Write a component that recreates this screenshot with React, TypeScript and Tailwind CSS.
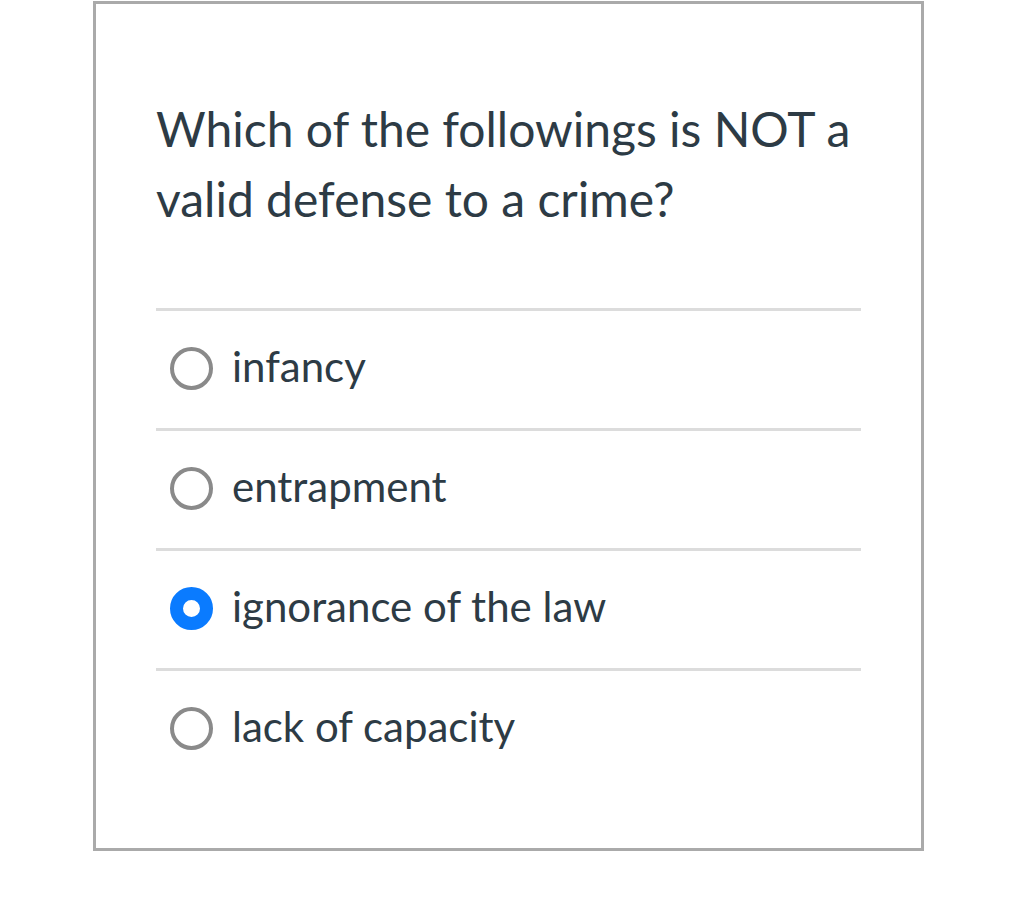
import React from "react";

const options = ["infancy", "entrapment", "ignorance of the law", "lack of capacity"];

export default function App() {
  return (
    <div className="w-[1010px] h-[918px] bg-white" style={{ fontFamily: "Lato, sans-serif" }}>
      <div className="ml-[93px] mt-[1px] w-[831px] h-[850px] border-[3px] border-[#aaaaaa] px-[60px] pt-[90px]">
        <p className="text-[48px] leading-[70px] text-[#2d3b45]">
          Which of the followings is NOT a valid defense to a crime?
        </p>
        <div className="mt-[74px]">
          {options.map((o, i) => (
            <div key={o} className="flex items-center h-[120px] border-t-[3px] border-[#dcdcdc]">
              {i === 2 ? (
                <span className="ml-[14px] mb-[2px] w-[43px] h-[43px] rounded-full border-[13px] border-[#0a7bff] bg-white" />
              ) : (
                <span className="ml-[14px] mb-[2px] w-[43px] h-[43px] rounded-full border-[4px] border-[#8a8a8a] bg-white" />
              )}
              <span className="ml-[19px] mb-[8px] text-[42px] leading-[50px] text-[#2d3b45]">{o}</span>
            </div>
          ))}
        </div>
      </div>
    </div>
  );
}
